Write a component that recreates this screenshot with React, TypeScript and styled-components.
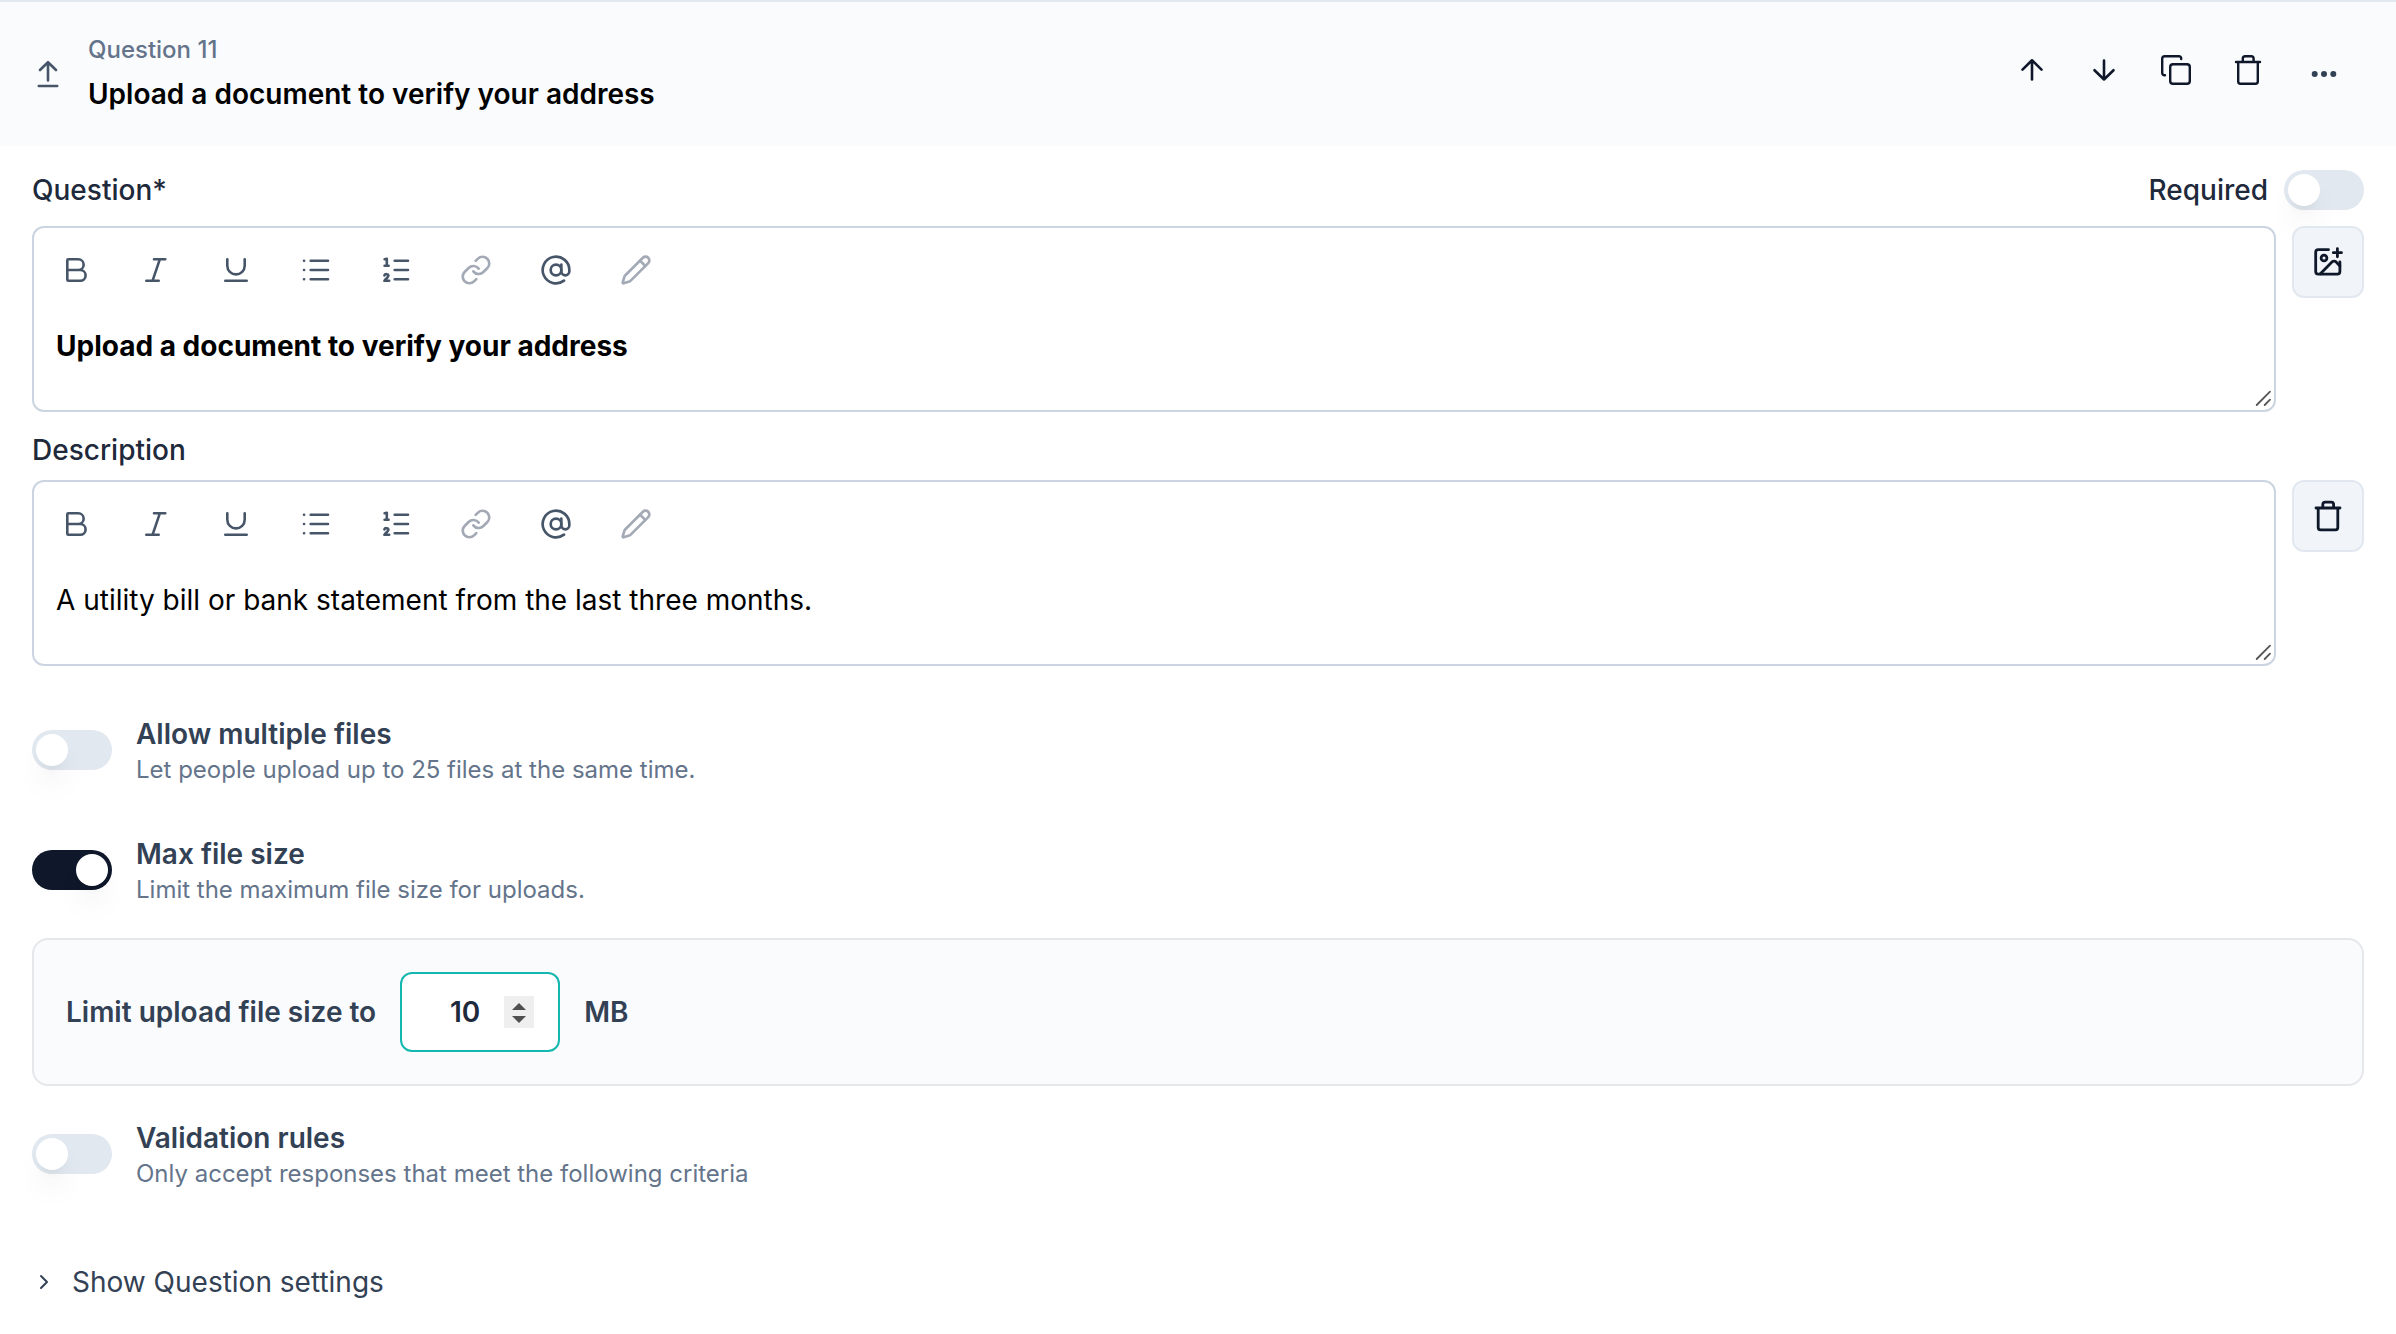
import React, { useState } from "react";
import styled, { createGlobalStyle } from "styled-components";
import { AtSign, Link, Pencil } from "lucide-react";

const GlobalStyle = createGlobalStyle`
  *, *::before, *::after { box-sizing: border-box; }
  body {
    margin: 0;
    background: #ffffff;
    color: #1e293b;
    font-family: Inter, "Liberation Sans", sans-serif;
    font-size: 28px;
    line-height: 40px;
  }
  button, input, textarea { font: inherit; color: inherit; margin: 0; }
  button { border: 0; padding: 0; background: none; cursor: pointer; }
  svg { display: block; flex: none; }
`;

const Glyph = styled.svg<{ $weight?: number }>`
  fill: none;
  stroke: currentColor;
  stroke-width: ${(p) => p.$weight ?? 2.6};
  stroke-linecap: round;
  stroke-linejoin: round;
`;

const Header = styled.header`
  display: flex;
  align-items: center;
  justify-content: space-between;
  height: 146px;
  padding: 0 44px 0 32px;
  border-top: 2px solid #e2e8f0;
  background: #f9fbfd;
`;

const HeaderTitle = styled.div`
  display: flex;
  align-items: center;
  gap: 24px;
  color: #475569;
`;

const Eyebrow = styled.div`
  font-size: 24px;
  font-weight: 500;
  line-height: 32px;
  color: #64748b;
`;

const Title = styled.h2`
  margin: 8px 0 0;
  font-size: 28px;
  font-weight: 600;
  line-height: 40px;
  color: #000000;
`;

const Actions = styled.div`
  display: flex;
  align-items: center;
  gap: 24px;
`;

const ActionGroup = styled.div`
  display: flex;
  gap: 24px;
  padding-bottom: 8px;
`;

const IconButton = styled.button`
  display: grid;
  place-items: center;
  width: 48px;
  height: 48px;
  color: #0f172a;
`;

const MoreButton = styled(IconButton)`
  width: 56px;
  color: #334155;
`;

const Body = styled.main`
  padding: 22px 32px 0;
`;

const LabelRow = styled.div`
  display: flex;
  align-items: center;
  justify-content: space-between;
  min-height: 44px;
  margin-bottom: 14px;
`;

const Label = styled.label`
  font-weight: 500;
`;

const RequiredGroup = styled.div`
  display: flex;
  align-items: center;
  gap: 16px;
`;

const SwitchInput = styled.input`
  appearance: none;
  flex: none;
  display: block;
  width: 80px;
  height: 40px;
  padding: 4px;
  border-radius: 20px;
  background: #e2e8f0;
  cursor: pointer;

  &::before {
    content: "";
    display: block;
    width: 32px;
    height: 32px;
    border-radius: 50%;
    background: #ffffff;
    box-shadow: 0 20px 30px -6px rgb(0 0 0 / 0.1), 0 8px 12px -8px rgb(0 0 0 / 0.1);
  }

  &:checked { background: #0f172a; }
  &:checked::before { margin-left: 40px; }
`;

const FieldRow = styled.div`
  display: flex;
  align-items: flex-start;
  gap: 16px;
`;

const Editor = styled.div`
  flex: 1;
  min-width: 0;
  border: 2px solid #cbd5e1;
  border-radius: 12px;
  background: #ffffff;
`;

const Toolbar = styled.div`
  display: flex;
  gap: 40px;
  padding: 22px 22px 0;
`;

const ToolButton = styled.button`
  display: grid;
  place-items: center;
  width: 40px;
  height: 40px;
  color: #475569;
  &:disabled { color: #a3aab6; cursor: default; }
`;

const TextWrap = styled.div`
  position: relative;
`;

const TextArea = styled.textarea<{ $bold?: boolean }>`
  display: block;
  width: 100%;
  height: 120px;
  padding: 36px 22px 0;
  border: 0;
  border-radius: 12px;
  outline: 0;
  background: transparent;
  resize: none;
  overflow: hidden;
  font-weight: ${(p) => (p.$bold ? 700 : 400)};
  color: #000000;
`;

const GripMark = styled(Glyph)`
  position: absolute;
  right: 2px;
  bottom: 2px;
  color: #555555;
  pointer-events: none;
`;

const SideButton = styled(IconButton)`
  width: 72px;
  height: 72px;
  border: 2px solid #e2e8f0;
  border-radius: 12px;
  background: #f1f5f9;
`;

const DescriptionLabel = styled(LabelRow)`
  min-height: 40px;
  margin: 18px 0 10px;
`;

const OptionRow = styled.div<{ $top: number }>`
  display: flex;
  align-items: center;
  gap: 24px;
  margin-top: ${(p) => p.$top}px;
`;

const OptionTitle = styled.label`
  display: block;
  font-weight: 600;
  line-height: 40px;
  color: #334155;
`;

const OptionHint = styled.div`
  font-size: 24px;
  line-height: 32px;
  color: #64748b;
`;

const LimitCard = styled.div`
  display: flex;
  align-items: center;
  gap: 24px;
  margin-top: 32px;
  padding: 32px;
  border: 2px solid #e5e7eb;
  border-radius: 16px;
  background: #f9fbfd;
  font-weight: 600;
  color: #334155;
`;

const NumberBox = styled.div`
  display: flex;
  align-items: center;
  width: 160px;
  height: 80px;
  padding: 0 24px;
  border: 2px solid #14b8b0;
  border-radius: 12px;
  background: #ffffff;
`;

const NumberInput = styled.input`
  flex: 1;
  min-width: 0;
  width: 0;
  padding: 0;
  border: 0;
  outline: 0;
  background: transparent;
  text-align: center;
  font-weight: 600;
  color: #1e293b;
  appearance: textfield;
  &::-webkit-inner-spin-button { appearance: none; }
`;

const Stepper = styled.div`
  display: grid;
  width: 30px;
  height: 32px;
  background: #efefef;
  color: #4f4f4f;
`;

const StepButton = styled.button<{ $down?: boolean }>`
  display: grid;
  justify-items: center;
  align-items: ${(p) => (p.$down ? "start" : "end")};
  height: 16px;
  padding: ${(p) => (p.$down ? "4px 0 0" : "0 0 2px")};
`;

const Disclosure = styled.button`
  display: flex;
  align-items: center;
  gap: 16px;
  margin-top: 72px;
  color: #334155;
`;

function ArrowIcon({ down }: { down?: boolean }) {
  return (
    <Glyph width="32" height="32" viewBox="0 0 32 32">
      <path d={down ? "M16 6.500V25.500M6.500 16.200l9.500 9.300 9.500-9.300" : "M16 25.500V6.300M6.500 15.600L16 6.300l9.500 9.300"} />
    </Glyph>
  );
}

function UploadIcon() {
  return (
    <Glyph width="32" height="32" viewBox="0 0 32 32">
      <path d="M16 22.500V4.200M8 12l8-7.800L24 12M6.800 28h18.400" />
    </Glyph>
  );
}

function TrashIcon({ weight = 2.4 }: { weight?: number }) {
  return (
    <Glyph $weight={weight} width="32" height="32" viewBox="0 0 32 32">
      <path d="M4 8h24M6.200 8v19.600a2.200 2.200 0 0 0 2.200 2.200h15.200a2.200 2.200 0 0 0 2.200-2.200V8M10.800 8V4.600a2.400 2.400 0 0 1 2.400-2.400h6a2.400 2.400 0 0 1 2.400 2.400V8" />
    </Glyph>
  );
}

function CopyIcon() {
  return (
    <Glyph $weight={2.4} width="32" height="32" viewBox="0 0 32 32">
      <rect x="10.200" y="10.200" width="19.600" height="19.600" rx="2.800" />
      <path d="M5 21.200h-.6a2.200 2.200 0 0 1-2.200-2.200V4.800a2.600 2.600 0 0 1 2.600-2.600H19a2.200 2.200 0 0 1 2.200 2.200V5" />
    </Glyph>
  );
}

function MoreIcon() {
  return (
    <svg width="32" height="32" viewBox="0 0 32 32" fill="currentColor">
      <circle cx="6.700" cy="16" r="3" />
      <circle cx="16" cy="16" r="3" />
      <circle cx="25.300" cy="16" r="3" />
    </svg>
  );
}

function ImagePlusIcon() {
  return (
    <Glyph $weight={2.8} width="32" height="32" viewBox="0 0 32 32">
      <path d="M16.500 3.700H6.300a2.600 2.600 0 0 0-2.600 2.600v19.200a2.600 2.600 0 0 0 2.600 2.600h19a2.600 2.600 0 0 0 2.600-2.600V16" />
      <path d="M25.400 2.600v8.200M21.300 6.700h8.200" />
      <circle cx="12" cy="12" r="2.900" />
      <path d="M8.400 27.800 20.200 15.800a2.600 2.600 0 0 1 3.700 0l4 4.100" />
    </Glyph>
  );
}

function ToolGlyph({ children }: { children: React.ReactNode }) {
  return (
    <Glyph width="40" height="40" viewBox="0 0 40 40">
      {children}
    </Glyph>
  );
}

const tools = [
  {
    name: "Bold",
    icon: (
      <ToolGlyph>
        <path d="M11.300 20v-9.700a1 1 0 0 1 1-1h10a5.350 5.350 0 0 1 0 10.700zM11.300 20h12.900a5.400 5.400 0 0 1 0 10.800H12.300a1 1 0 0 1-1-1z" />
      </ToolGlyph>
    ),
  },
  {
    name: "Italic",
    icon: (
      <ToolGlyph>
        <path d="M18 9.300h11.300M10.300 30.700h12.400M23.800 9.300 16.600 30.700" />
      </ToolGlyph>
    ),
  },
  {
    name: "Underline",
    icon: (
      <ToolGlyph>
        <path d="M11.300 9.300v6.400a8.700 8.700 0 0 0 17.400 0V9.300M9.300 30.700h21.400" />
      </ToolGlyph>
    ),
  },
  {
    name: "Bulleted list",
    icon: (
      <ToolGlyph>
        <path d="M14.700 10.700H32M14.700 20H32M14.700 29.300H32M8 10.700h.1M8 20h.1M8 29.300h.1" />
      </ToolGlyph>
    ),
  },
  {
    name: "Numbered list",
    icon: (
      <ToolGlyph>
        <path d="M18.700 10.700H32M18.700 20H32M18.700 29.300H32M8.600 9.200l2.200-.4v7M8.600 15.800h4M8.400 25.400c.6-1.800 4-1.600 4 .4 0 1.600-2.600 2.600-4 5h4.800" />
      </ToolGlyph>
    ),
  },
  { name: "Link", disabled: true, icon: <Link size={32} /> },
  { name: "Mention", icon: <AtSign size={32} /> },
  { name: "Edit", disabled: true, icon: <Pencil size={32} /> },
];

function FormatToolbar() {
  return (
    <Toolbar role="toolbar">
      {tools.map((tool) => (
        <ToolButton key={tool.name} type="button" aria-label={tool.name} disabled={tool.disabled}>
          {tool.icon}
        </ToolButton>
      ))}
    </Toolbar>
  );
}

function RichText({ id, bold, text }: { id: string; bold?: boolean; text: string }) {
  return (
    <Editor>
      <FormatToolbar />
      <TextWrap>
        <TextArea id={id} $bold={bold} defaultValue={text} />
        <GripMark $weight={1.8} width="20" height="20" viewBox="0 0 20 20">
          <path d="M4.700 17 18 3.700M12.700 17l5.300-5.300" />
        </GripMark>
      </TextWrap>
    </Editor>
  );
}

type OptionProps = { id: string; title: string; hint: string; top: number; on?: boolean };

function Option({ id, title, hint, top, on }: OptionProps) {
  return (
    <OptionRow $top={top}>
      <SwitchInput id={id} type="checkbox" role="switch" defaultChecked={on} />
      <div>
        <OptionTitle htmlFor={id}>{title}</OptionTitle>
        <OptionHint>{hint}</OptionHint>
      </div>
    </OptionRow>
  );
}

export default function App() {
  const [size, setSize] = useState(10);
  return (
    <>
      <GlobalStyle />
      <Header>
        <HeaderTitle>
          <UploadIcon />
          <div>
            <Eyebrow>Question 11</Eyebrow>
            <Title>Upload a document to verify your address</Title>
          </div>
        </HeaderTitle>
        <Actions>
          <ActionGroup>
            <IconButton type="button" aria-label="Move up"><ArrowIcon /></IconButton>
            <IconButton type="button" aria-label="Move down"><ArrowIcon down /></IconButton>
            <IconButton type="button" aria-label="Duplicate"><CopyIcon /></IconButton>
            <IconButton type="button" aria-label="Delete"><TrashIcon /></IconButton>
          </ActionGroup>
          <MoreButton type="button" aria-label="More"><MoreIcon /></MoreButton>
        </Actions>
      </Header>
      <Body>
        <LabelRow>
          <Label htmlFor="question">Question*</Label>
          <RequiredGroup>
            <Label htmlFor="required">Required</Label>
            <SwitchInput id="required" type="checkbox" role="switch" />
          </RequiredGroup>
        </LabelRow>
        <FieldRow>
          <RichText id="question" bold text="Upload a document to verify your address" />
          <SideButton type="button" aria-label="Add image"><ImagePlusIcon /></SideButton>
        </FieldRow>
        <DescriptionLabel>
          <Label htmlFor="description">Description</Label>
        </DescriptionLabel>
        <FieldRow>
          <RichText id="description" text="A utility bill or bank statement from the last three months." />
          <SideButton type="button" aria-label="Remove description"><TrashIcon weight={2.8} /></SideButton>
        </FieldRow>
        <Option id="multiple" top={48} title="Allow multiple files" hint="Let people upload up to 25 files at the same time." />
        <Option id="max-size" top={48} on title="Max file size" hint="Limit the maximum file size for uploads." />
        <LimitCard>
          <label htmlFor="limit">Limit upload file size to</label>
          <NumberBox>
            <NumberInput id="limit" type="number" value={size} onChange={(e) => setSize(Number(e.target.value))} />
            <Stepper>
              <StepButton type="button" aria-label="Increase" onClick={() => setSize(size + 1)}>
                <svg width="14" height="7" viewBox="0 0 14 7"><path d="M0 7 7 0l7 7z" fill="currentColor" /></svg>
              </StepButton>
              <StepButton $down type="button" aria-label="Decrease" onClick={() => setSize(size - 1)}>
                <svg width="14" height="7" viewBox="0 0 14 7"><path d="M0 0l7 7 7-7z" fill="currentColor" /></svg>
              </StepButton>
            </Stepper>
          </NumberBox>
          <span>MB</span>
        </LimitCard>
        <Option id="validation" top={32} title="Validation rules" hint="Only accept responses that meet the following criteria" />
        <Disclosure type="button" aria-expanded={false}>
          <Glyph $weight={2} width="24" height="24" viewBox="0 0 24 24"><path d="m9 6 6 6-6 6" /></Glyph>
          Show Question settings
        </Disclosure>
      </Body>
    </>
  );
}
